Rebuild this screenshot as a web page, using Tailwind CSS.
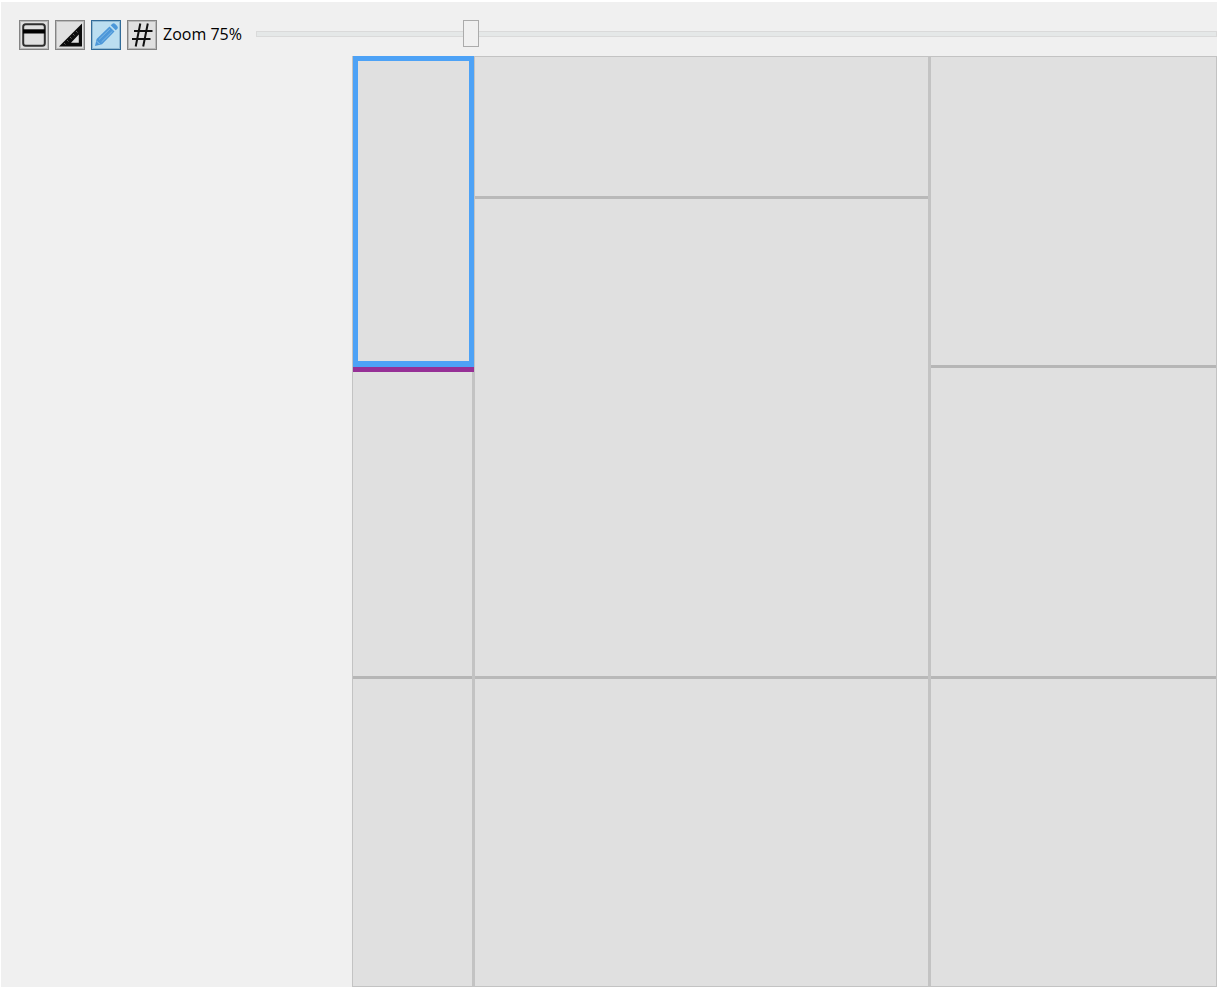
<!DOCTYPE html>
<html lang="en">
<head>
<meta charset="utf-8">
<title>Layout editor</title>
<script src="https://cdn.jsdelivr.net/npm/@tailwindcss/browser@4"></script>
</head>
<body class="flex h-screen flex-col overflow-hidden border-t-2 border-l border-white bg-[#f0f0f0] font-['Open_Sans','Noto_Sans',sans-serif] text-black">
  <header class="flex h-[54px] shrink-0 items-start pt-[18px] pl-[18px]">
    <div class="flex gap-1.5">
      <button type="button" aria-label="Window" class="size-[30px] border border-[#848484] bg-[#e0e0e0] outline outline-1 -outline-offset-2 outline-[#b9b9b9]">
        <svg viewBox="0 0 28 28" class="size-7"><rect x="3.200" y="3.200" width="21.600" height="21.600" rx="2.500" fill="none" stroke="#2e2e2e" stroke-width="2"/><path d="M3 8.300h22v4.200H3z" fill="#000"/></svg>
      </button>
      <button type="button" aria-label="Set square" class="size-[30px] border border-[#848484] bg-[#e0e0e0] outline outline-1 -outline-offset-2 outline-[#b9b9b9]">
        <svg viewBox="0 0 28 28" class="size-7"><path d="M26 2.500V25.500H3zM22.800 13.500l-7.800 8.200H22.800z" fill="#0b0b0b" fill-rule="evenodd"/><path d="M8 22l1.500 1.500M11 19l1.500 1.500M14 16l1.500 1.500M17 13l1.500 1.500M20 10l1.500 1.500" stroke="#777" stroke-width=".8"/></svg>
      </button>
      <button type="button" aria-label="Edit" aria-pressed="true" class="size-[30px] border border-[#326b98] bg-[#bbdef0] outline outline-1 -outline-offset-2 outline-[#91bad4]">
        <svg viewBox="0 0 28 28" class="size-7"><g fill="#4b97d9"><path d="M3 25l1.600-7L17.500 5.500l5 5L10 23.200z"/><path d="M18.700 4.300l1.700-1.600q1.400-1 2.800.2l2 2q1.200 1.400.2 2.800l-1.700 1.600z"/></g><path d="M7 18.500L18 7.800M9.500 21L20.500 10.200" stroke="#83bce6" stroke-width=".9"/><path d="M4.800 20.200l2.800 2.800" stroke="#a5d0ec" stroke-width=".8"/></svg>
      </button>
      <button type="button" aria-label="Grid" class="size-[30px] border border-[#848484] bg-[#e0e0e0] outline outline-1 -outline-offset-2 outline-[#b9b9b9]">
        <svg viewBox="0 0 28 28" class="size-7"><path d="M12.300 2.500L7.700 25.500M19.800 2.500L15.200 25.500M6 10h18.500M4 18h18.500" fill="none" stroke="#111" stroke-width="2"/></svg>
      </button>
    </div>
    <label for="zoom" class="ml-1.5 w-[93px] shrink-0 text-base leading-7 whitespace-nowrap">Zoom 75%</label>
    <input id="zoom" type="range" min="10" max="307" value="75" class="h-7 min-w-0 flex-1 appearance-none bg-transparent [&::-webkit-slider-runnable-track]:h-1.5 [&::-webkit-slider-runnable-track]:border [&::-webkit-slider-runnable-track]:border-[#dadada] [&::-webkit-slider-runnable-track]:bg-[#e5e8e8] [&::-webkit-slider-thumb]:-mt-3 [&::-webkit-slider-thumb]:h-[27px] [&::-webkit-slider-thumb]:w-4 [&::-webkit-slider-thumb]:appearance-none [&::-webkit-slider-thumb]:border [&::-webkit-slider-thumb]:border-[#ababab] [&::-webkit-slider-thumb]:bg-[#f0f0f0]">
  </header>

  <main class="flex min-h-0 flex-1">
    <div class="w-[351px] shrink-0"></div>
    <div class="grid min-w-0 flex-1 grid-cols-[119fr_454fr_285fr] gap-x-[3px] border border-[#c3c3c3] bg-[#c3c3c3]">
      <div class="flex min-h-0 flex-col bg-[#b6b6b6]">
        <section class="-mt-px -mr-0.5 flex-[300_1_0] border-[5px] border-b-[6px] border-[#4da2f6] bg-[#e0e0e0]"></section>
        <div class="-mr-0.5 h-[5px] bg-[#963096]"></div>
        <section class="flex-[304_1_0] bg-[#e0e0e0]"></section>
        <section class="mt-[3px] flex-[307_1_0] bg-[#e0e0e0]"></section>
      </div>
      <div class="flex min-h-0 flex-col gap-[3px] bg-[#b9b9b9]">
        <section class="flex-[139_1_0] bg-[#e0e0e0]"></section>
        <section class="flex-[477_1_0] bg-[#e0e0e0]"></section>
        <section class="flex-[307_1_0] bg-[#e0e0e0]"></section>
      </div>
      <div class="flex min-h-0 flex-col gap-[3px] bg-[#b6b6b6]">
        <section class="flex-[308_1_0] bg-[#e0e0e0]"></section>
        <section class="flex-[308_1_0] bg-[#e0e0e0]"></section>
        <section class="flex-[307_1_0] bg-[#e0e0e0]"></section>
      </div>
    </div>
  </main>
</body>
</html>
